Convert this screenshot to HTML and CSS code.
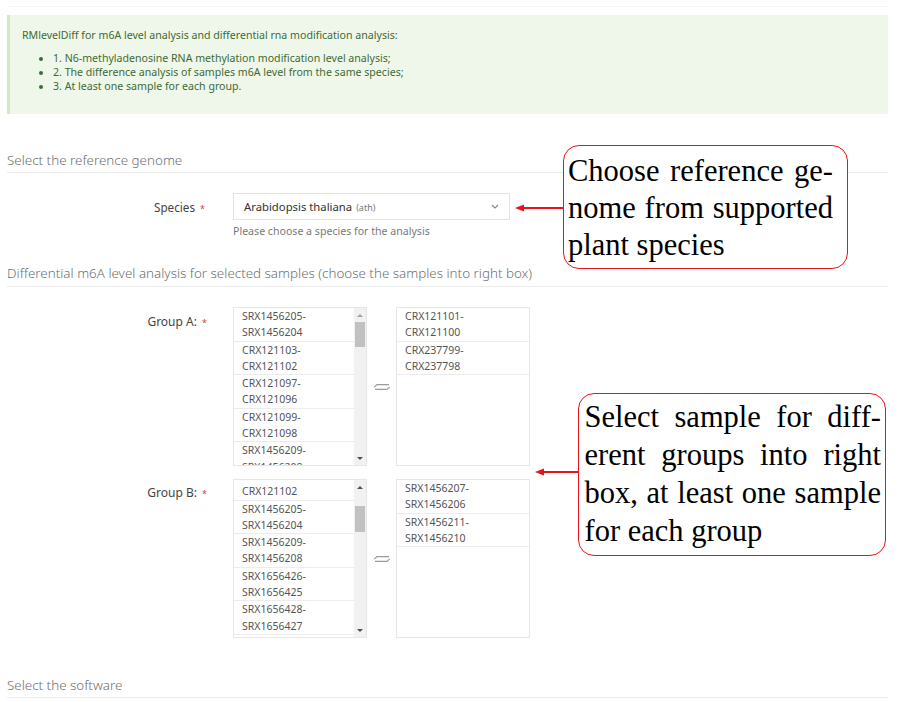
FILE: index.html
```html
<!DOCTYPE html>
<html lang="en">
<head>
<meta charset="utf-8">
<title>RMlevelDiff</title>
<link rel="stylesheet" href="styles.css">
</head>
<body>
<div class="page">
  <div class="topline"></div>
  <div class="alert">
    <p class="alert-title">RMlevelDiff for m6A level analysis and differential rna modification analysis:</p>
    <ul class="alert-list">
      <li>1. N6-methyladenosine RNA methylation modification level analysis;</li>
      <li>2. The difference analysis of samples m6A level from the same species;</li>
      <li>3. At least one sample for each group.</li>
    </ul>
  </div>

  <h3 class="section s1">Select the reference genome</h3>
  <div class="row row-species">
    <div class="label lab-species">Species <span class="req">*</span></div>
    <div class="field">
      <div class="select">
        <span class="sel-main">Arabidopsis thaliana</span>
        <span class="sel-sub">(ath)</span>
        <svg class="chev" width="8" height="5" viewBox="0 0 8 5"><path d="M1 1 L4 4 L7 1" fill="none" stroke="#888" stroke-width="1.1"/></svg>
      </div>
      <div class="help">Please choose a species for the analysis</div>
    </div>
  </div>

  <h3 class="section s2">Differential m6A level analysis for selected samples (choose the samples into right box)</h3>

  <div class="row row-group ga">
    <div class="label lab-group">Group A: <span class="req">*</span></div>
    <div class="dual">
      <div class="list-box">
        <div class="list-view">
          <div class="items">
            <div class="item">SRX1456205-<br>SRX1456204</div>
            <div class="item">CRX121103-<br>CRX121102</div>
            <div class="item">CRX121097-<br>CRX121096</div>
            <div class="item">CRX121099-<br>CRX121098</div>
            <div class="item">SRX1456209-<br>SRX1456208</div>
          </div>
        </div>
        <div class="scrollbar">
          <div class="sb-btn"><span class="tri-up"></span></div>
          <div class="thumb"></div>
          <div class="sb-fill"></div>
          <div class="sb-btn"><span class="tri-down"></span></div>
        </div>
      </div>
      <div class="swap">
        <svg width="18" height="12" viewBox="0 0 18 12"><path d="M16 3.6 H4 L1.2 6.2" fill="none" stroke="#9a9a9a" stroke-width="1.1"/><path d="M16.8 5.8 L14 8.4 H2" fill="none" stroke="#9a9a9a" stroke-width="1.1"/></svg>
      </div>
      <div class="list-box">
        <div class="list-view">
          <div class="items">
            <div class="item">CRX121101-<br>CRX121100</div>
            <div class="item">CRX237799-<br>CRX237798</div>
          </div>
        </div>
      </div>
    </div>
  </div>

  <div class="row row-group gb">
    <div class="label lab-group">Group B: <span class="req">*</span></div>
    <div class="dual">
      <div class="list-box">
        <div class="list-view">
          <div class="items scrolled">
            <div class="item">CRX121103-<br>CRX121102</div>
            <div class="item">SRX1456205-<br>SRX1456204</div>
            <div class="item">SRX1456209-<br>SRX1456208</div>
            <div class="item">SRX1656426-<br>SRX1656425</div>
            <div class="item">SRX1656428-<br>SRX1656427</div>
          </div>
        </div>
        <div class="scrollbar">
          <div class="sb-btn"><span class="tri-up"></span></div>
          <div class="thumb thumb-b"></div>
          <div class="sb-fill"></div>
          <div class="sb-btn"><span class="tri-down"></span></div>
        </div>
      </div>
      <div class="swap">
        <svg width="18" height="12" viewBox="0 0 18 12"><path d="M16 3.6 H4 L1.2 6.2" fill="none" stroke="#9a9a9a" stroke-width="1.1"/><path d="M16.8 5.8 L14 8.4 H2" fill="none" stroke="#9a9a9a" stroke-width="1.1"/></svg>
      </div>
      <div class="list-box">
        <div class="list-view">
          <div class="items">
            <div class="item">SRX1456207-<br>SRX1456206</div>
            <div class="item">SRX1456211-<br>SRX1456210</div>
          </div>
        </div>
      </div>
    </div>
  </div>

  <h3 class="section s3">Select the software</h3>
</div>

<svg class="arrow arrow1" width="52" height="10" viewBox="0 0 52 10"><path d="M9 5 H50" stroke="#e8121b" stroke-width="2"/><path d="M1 5 L10 1.5 L10 8.5 Z" fill="#e8121b"/></svg>
<div class="callout callout1">
  <div class="cl j">Choose reference ge-</div>
  <div class="cl j">nome from supported</div>
  <div class="cl">plant species</div>
</div>

<svg class="arrow arrow2" width="46" height="10" viewBox="0 0 46 10"><path d="M9 5 H45" stroke="#e8121b" stroke-width="2"/><path d="M1 5 L10 1.5 L10 8.5 Z" fill="#e8121b"/></svg>
<div class="callout callout2">
  <div class="cl j">Select sample for diff-</div>
  <div class="cl j">erent groups into right</div>
  <div class="cl j">box, at least one sample</div>
  <div class="cl">for each group</div>
</div>
</body>
</html>
```

FILE: styles.css
```css
html, body {
  margin: 0;
  padding: 0;
  background: #fff;
}
body {
  width: 900px;
  height: 702px;
  overflow: hidden;
  position: relative;
  font-family: "Noto Sans", "Open Sans", sans-serif;
}
.page {
  padding: 0 12px 0 7px;
}
.topline {
  height: 6px;
  border-bottom: 1px solid #f3f3f3;
}
.alert {
  margin-top: 8px;
  height: 99px;
  box-sizing: border-box;
  background: #eff7ea;
  border-left: 3px solid #d3e8c6;
  padding: 13px 12px 0 12px;
  color: #3d6b35;
  font-size: 10.6px;
  line-height: 14px;
}
.alert-title {
  margin: 0;
}
.alert-list {
  margin: 9px 0 0 0;
  padding-left: 31px;
  list-style: disc;
}
.section {
  margin: 0;
  font-weight: 300;
  font-size: 13.4px;
  line-height: 16px;
  color: #707070;
  padding-bottom: 4px;
  border-bottom: 1px solid #ececec;
}
.s1 { margin-top: 38px; }
.s2 { margin-top: 27px; padding-bottom: 5px; }
.s3 { margin-top: 39px; }
.row {
  display: flex;
  align-items: flex-start;
}
.row-species { margin-top: 20px; }
.ga { margin-top: 20px; }
.gb { margin-top: 13px; }
.label {
  width: 226px;
  box-sizing: border-box;
  text-align: right;
  padding-right: 27px;
  font-size: 12px;
  line-height: 16px;
  color: #444;
}
.lab-species { padding-top: 6px; padding-right: 28px; font-size: 11.7px; }
.lab-group { padding-top: 7px; padding-right: 26px; }
.gb .lab-group { padding-top: 6px; }
.req {
  color: #e0373f;
  font-size: 9px;
  margin-left: 2px;
}
.field {
  display: flex;
  flex-direction: column;
}
.select {
  width: 277px;
  height: 27px;
  box-sizing: border-box;
  border: 1px solid #e3e3e3;
  display: flex;
  align-items: center;
  padding: 0 10px 0 10px;
  font-size: 11.3px;
  color: #333;
}
.sel-sub {
  font-size: 9px;
  color: #777;
  margin-left: 4px;
  margin-top: 1px;
}
.chev {
  margin-left: auto;
  margin-right: 0;
}
.help {
  margin-top: 4px;
  font-size: 10.6px;
  line-height: 14px;
  color: #7a7a7a;
}
.dual {
  display: flex;
  align-items: center;
}
.list-box {
  width: 134px;
  height: 159px;
  box-sizing: border-box;
  border: 1px solid #e6e6e6;
  display: flex;
  overflow: hidden;
}
.list-view {
  flex: 1;
  overflow: hidden;
}
.items.scrolled {
  margin-top: -13px;
}
.item {
  padding: 0 8px;
  line-height: 16.3px;
  border-bottom: 1px solid #ececec;
  font-size: 10.5px;
  color: #555;
  white-space: nowrap;
}
.scrollbar {
  width: 12px;
  background: #f1f1f1;
  display: flex;
  flex-direction: column;
}
.sb-btn {
  height: 14px;
  display: flex;
  align-items: center;
  justify-content: center;
}
.tri-up {
  width: 0;
  height: 0;
  border-left: 3px solid transparent;
  border-right: 3px solid transparent;
  border-bottom: 3px solid #a3a3a3;
}
.tri-down {
  width: 0;
  height: 0;
  border-left: 3px solid transparent;
  border-right: 3px solid transparent;
  border-top: 3px solid #505050;
}
.thumb {
  height: 25px;
  margin: 0 1px;
  background: #c1c1c1;
}
.thumb-b {
  margin-top: 12px;
  height: 26px;
}
.gb .tri-up { border-bottom-color: #505050; }
.sb-fill { flex: 1; }
.swap {
  width: 29px;
  display: flex;
  justify-content: center;
  align-items: center;
}
.callout {
  position: absolute;
  box-sizing: border-box;
  background: #fff;
  border: 1.5px solid #e8121b;
  border-radius: 16px;
  font-family: "Liberation Serif", "Times New Roman", serif;
  color: #000;
  font-size: 30.5px;
}
.callout1 {
  left: 563px;
  top: 145px;
  width: 285px;
  height: 124px;
  padding: 6.5px 14px 0 4px;
  line-height: 37px;
}
.callout2 {
  left: 578px;
  top: 393px;
  width: 308px;
  height: 163px;
  padding: 4px 4px 0 5.5px;
  line-height: 38px;
}
.cl {
  white-space: nowrap;
}
.cl.j {
  text-align: justify;
  text-align-last: justify;
  white-space: normal;
}
.arrow {
  position: absolute;
}
.arrow1 {
  left: 514px;
  top: 203px;
}
.arrow2 {
  left: 534px;
  top: 467px;
}
```
